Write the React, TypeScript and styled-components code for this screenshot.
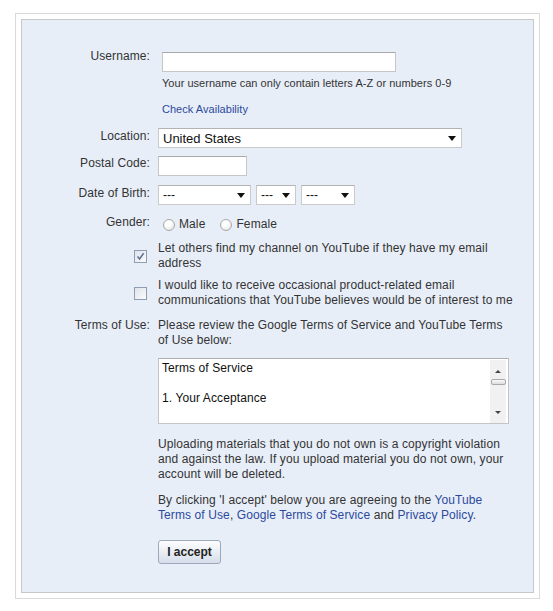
import styled, { createGlobalStyle } from "styled-components";

const GlobalStyle = createGlobalStyle`
  body {
    margin: 0;
    background: #fff;
    font-family: "Liberation Sans", Arial, sans-serif;
    color: #333;
  }
`;

const Frame = styled.div`
  box-sizing: border-box;
  width: 525px;
  margin: 13px 0 0 15px;
  padding: 5px;
  border: 1px solid #dadada;
  background: #fff;
`;

const Panel = styled.div`
  box-sizing: border-box;
  width: 513px;
  padding: 27px 0 28px;
  border: 1px solid #c8c8c8;
  background: #e8eef8;
`;

const Row = styled.div<{ $top: number }>`
  display: grid;
  grid-template-columns: 128px 356px;
  column-gap: 8px;
  margin-top: ${(p) => p.$top}px;
  font-size: 12px;
  line-height: 15px;
  letter-spacing: 0.1px;
`;

const Label = styled.div<{ $pad?: number }>`
  text-align: right;
  padding-top: ${(p) => p.$pad ?? 0}px;
  white-space: nowrap;
`;

const CheckCell = styled.div`
  display: flex;
  justify-content: flex-end;
  align-items: center;
  padding-right: 3px;
`;

const Field = styled.div`
  display: flex;
  flex-direction: column;
  align-items: flex-start;
`;

const TextInput = styled.input<{ $width: number; $indent?: number; $top?: number }>`
  box-sizing: border-box;
  width: ${(p) => p.$width}px;
  height: 20px;
  margin: ${(p) => p.$top ?? 0}px 0 0 ${(p) => p.$indent ?? 0}px;
  padding: 0 3px;
  border: 1px solid #c6c6c6;
  border-top-color: #a9a9a9;
  background: #fff;
  font: 12px "Liberation Sans", Arial, sans-serif;
  outline: none;
`;

const Hint = styled.div<{ $top: number }>`
  margin: ${(p) => p.$top}px 0 0 4px;
  font-size: 11px;
  line-height: 14px;
  letter-spacing: 0.03px;
  white-space: nowrap;
`;

const Link = styled.a`
  color: #2b4a9d;
  text-decoration: none;
  cursor: pointer;
`;

const SelectRow = styled.div`
  display: flex;
  gap: 5px;
`;

const SelectBox = styled.div<{ $width: number; $size?: number }>`
  box-sizing: border-box;
  display: flex;
  align-items: center;
  justify-content: space-between;
  width: ${(p) => p.$width}px;
  height: 20px;
  padding: 0 5px 0 4px;
  border: 1px solid #cacaca;
  border-top-color: #b3b3b3;
  background: #fff;
  color: #111;
  font-size: ${(p) => p.$size ?? 12}px;
  letter-spacing: 0;
`;

const Arrow = styled.span`
  width: 0;
  height: 0;
  border-left: 4px solid transparent;
  border-right: 4px solid transparent;
  border-top: 5px solid #111;
`;

const RadioGroup = styled.div`
  display: flex;
  align-items: center;
  height: 15px;
  margin: 2px 0 0 5px;
`;

const Radio = styled.span`
  box-sizing: border-box;
  width: 12px;
  height: 12px;
  border-radius: 50%;
  border: 1px solid #a8a8a8;
  background: radial-gradient(circle at 40% 35%, #fff 30%, #dcdcdc 100%);
`;

const RadioText = styled.span<{ $gap: number }>`
  margin: 0 ${(p) => p.$gap}px 0 4px;
`;

const CheckBox = styled.span`
  box-sizing: border-box;
  display: flex;
  align-items: center;
  justify-content: center;
  width: 13px;
  height: 13px;
  border: 1px solid #8e9db3;
  background: linear-gradient(135deg, #dfe3ea, #fbfbfc);
`;

const Paragraph = styled.div<{ $top?: number; $width?: number }>`
  margin-top: ${(p) => p.$top ?? 0}px;
  max-width: ${(p) => (p.$width ? `${p.$width}px` : "none")};
`;

const TermsBox = styled.div`
  box-sizing: border-box;
  display: flex;
  width: 351px;
  height: 66px;
  margin-top: 10px;
  border: 1px solid #c4c4c4;
  border-top-color: #aeaeae;
  background: #fff;
  color: #111;
  overflow: hidden;
`;

const TermsText = styled.div`
  flex: 1;
  padding: 2px 3px;
`;

const Track = styled.div`
  position: relative;
  width: 16px;
  margin: 1px 2px 0 0;
  background: #f1f1f1;
`;

const TrackArrow = styled.span<{ $down?: boolean }>`
  position: absolute;
  left: 5px;
  ${(p) => (p.$down ? "bottom: 9px;" : "top: 10px;")}
  width: 0;
  height: 0;
  border-left: 3px solid transparent;
  border-right: 3px solid transparent;
  ${(p) => (p.$down ? "border-top: 3px solid #444;" : "border-bottom: 3px solid #444;")}
`;

const Thumb = styled.span`
  position: absolute;
  left: 1px;
  top: 19px;
  box-sizing: border-box;
  width: 15px;
  height: 6px;
  border: 1px solid #a8a8a8;
  border-radius: 2px;
  background: linear-gradient(#fafafa, #dcdcdc);
`;

const AcceptButton = styled.button`
  box-sizing: border-box;
  width: 63px;
  height: 24px;
  margin-top: 17px;
  padding: 0;
  border: 1px solid #9da9bb;
  border-radius: 3px;
  background: linear-gradient(#fdfdfe, #d6deeb);
  color: #222;
  font: bold 12px "Liberation Sans", Arial, sans-serif;
  cursor: pointer;
`;

function Check() {
  return (
    <svg width="9" height="9" viewBox="0 0 9 9">
      <path d="M1.5 4.5 L3.6 7 L7.6 1.2" fill="none" stroke="#5f7395" strokeWidth="1.6" />
    </svg>
  );
}

export default function App() {
  return (
    <>
      <GlobalStyle />
      <Frame>
        <Panel>
          <Row $top={0}>
            <Label $pad={2}>Username:</Label>
            <Field>
              <TextInput $width={234} $indent={4} $top={5} />
              <Hint $top={4}>Your username can only contain letters A-Z or numbers 0-9</Hint>
              <Hint $top={12}>
                <Link>Check Availability</Link>
              </Hint>
            </Field>
          </Row>

          <Row $top={12}>
            <Label $pad={1}>Location:</Label>
            <SelectBox $width={304} $size={13}>
              United States
              <Arrow />
            </SelectBox>
          </Row>

          <Row $top={8}>
            <Label>Postal Code:</Label>
            <TextInput $width={89} />
          </Row>

          <Row $top={9}>
            <Label $pad={1}>Date of Birth:</Label>
            <SelectRow>
              <SelectBox $width={93}>
                ---
                <Arrow />
              </SelectBox>
              <SelectBox $width={40}>
                ---
                <Arrow />
              </SelectBox>
              <SelectBox $width={54}>
                ---
                <Arrow />
              </SelectBox>
            </SelectRow>
          </Row>

          <Row $top={10}>
            <Label>Gender:</Label>
            <RadioGroup>
              <Radio />
              <RadioText $gap={15}>Male</RadioText>
              <Radio />
              <RadioText $gap={0}>Female</RadioText>
            </RadioGroup>
          </Row>

          <Row $top={9}>
            <CheckCell>
              <CheckBox>
                <Check />
              </CheckBox>
            </CheckCell>
            <Paragraph>Let others find my channel on YouTube if they have my email address</Paragraph>
          </Row>

          <Row $top={7}>
            <CheckCell>
              <CheckBox />
            </CheckCell>
            <Paragraph>
              I would like to receive occasional product-related email communications that YouTube
              believes would be of interest to me
            </Paragraph>
          </Row>

          <Row $top={10}>
            <Label>Terms of Use:</Label>
            <Field>
              <Paragraph $width={350}>
                Please review the Google Terms of Service and YouTube Terms of Use below:
              </Paragraph>
              <TermsBox>
                <TermsText>
                  Terms of Service
                  <br />
                  <br />
                  1. Your Acceptance
                </TermsText>
                <Track>
                  <TrackArrow />
                  <Thumb />
                  <TrackArrow $down />
                </Track>
              </TermsBox>
              <Paragraph $top={13}>
                Uploading materials that you do not own is a copyright violation and against the law.
                If you upload material you do not own, your account will be deleted.
              </Paragraph>
              <Paragraph $top={11}>
                By clicking 'I accept' below you are agreeing to the <Link>YouTube Terms of Use</Link>,{" "}
                <Link>Google Terms of Service</Link> and <Link>Privacy Policy</Link>.
              </Paragraph>
              <AcceptButton>I accept</AcceptButton>
            </Field>
          </Row>
        </Panel>
      </Frame>
    </>
  );
}
